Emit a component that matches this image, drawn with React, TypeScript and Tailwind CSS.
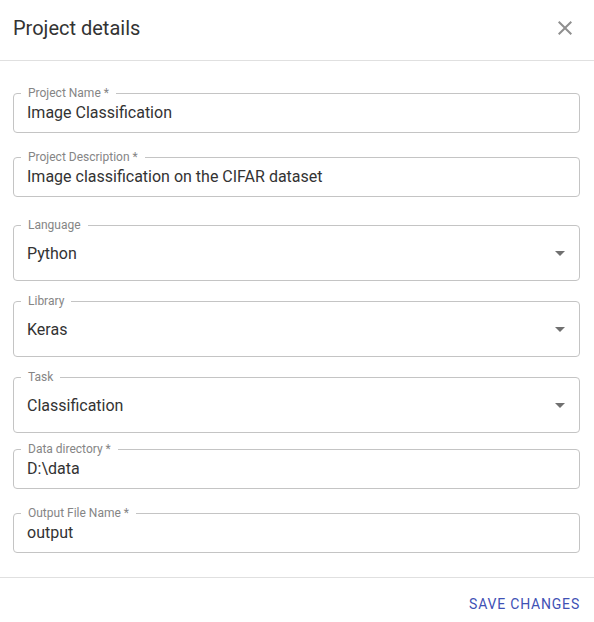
import React from "react";

type FieldProps = {
  label: string;
  value: string;
  required?: boolean;
  select?: boolean;
  className?: string;
};

function Field({ label, value, required, select, className }: FieldProps) {
  return (
    <div
      className={
        "relative box-border w-full rounded-[4px] border border-[#c4c4c4] flex items-center pl-[13px] pr-[7px] " +
        (select ? "h-[56px] " : "h-[40px] ") +
        (className ?? "")
      }
    >
      <span className="absolute left-[7px] top-[-8px] bg-white px-[7px] text-[12px] leading-[14px] text-[#858585]">
        {label}
        {required ? " *" : ""}
      </span>
      <span className={"flex-1 text-[16px] leading-[19px] text-[#333333] " + (select ? "" : "pb-[1px]")}>{value}</span>
      {select && (
        <svg width="24" height="24" viewBox="0 0 24 24" className="text-[#707070]">
          <path d="M7 10l5 5 5-5z" fill="currentColor" />
        </svg>
      )}
    </div>
  );
}

export default function App() {
  return (
    <div className="w-[594px] h-[622px] bg-white font-['Roboto',sans-serif] overflow-hidden">
      <div className="h-[61px] border-b border-[#e0e0e0] flex items-start justify-between pl-[13px] pr-[17px]">
        <h2 className="pt-[12px] text-[20px] leading-[32px] text-[#333333] font-normal">Project details</h2>
        <button className="mt-[16px] w-[24px] h-[24px] text-[#8f8f8f]">
          <svg width="24" height="24" viewBox="0 0 24 24">
            <path
              d="M19 6.41L17.59 5 12 10.59 6.41 5 5 6.41 10.59 12 5 17.59 6.41 19 12 13.41 17.59 19 19 17.59 13.41 12z"
              fill="currentColor"
            />
          </svg>
        </button>
      </div>
      <div className="flex flex-col pl-[13px] pr-[14px] pb-[24px] border-b border-[#e0e0e0]">
        <Field className="mt-[32px]" label="Project Name" required value="Image Classification" />
        <Field className="mt-[24px]" label="Project Description" required value="Image classification on the CIFAR dataset" />
        <Field className="mt-[28px]" label="Language" select value="Python" />
        <Field className="mt-[20px]" label="Library" select value="Keras" />
        <Field className="mt-[20px]" label="Task" select value="Classification" />
        <Field className="mt-[16px]" label="Data directory" required value="D:\data" />
        <Field className="mt-[24px]" label="Output File Name" required value="output" />
      </div>
      <div className="flex justify-end pr-[14px] pt-[14px]">
        <button className="text-[14px] leading-[24px] font-normal uppercase tracking-[0.8px] text-[#3f51b5]">
          Save changes
        </button>
      </div>
    </div>
  );
}
